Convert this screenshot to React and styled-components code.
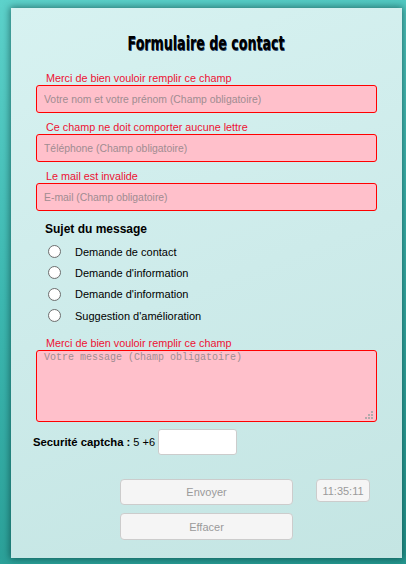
import React from "react";
import styled, { createGlobalStyle } from "styled-components";

const Global = createGlobalStyle`
  html, body { margin: 0; padding: 0; }
  body {
    width: 406px; height: 564px; overflow: hidden;
    background: linear-gradient(165deg, #5dd2cb 0%, #3db8b1 45%, #24978f 100%);
    font-family: "Liberation Sans", Arial, sans-serif;
  }
`;

const Page = styled.div`
  padding: 8px 4px 6px 11px;
  box-sizing: border-box;
  width: 406px;
  height: 564px;
`;

const Card = styled.form`
  box-sizing: border-box;
  width: 391px;
  height: 550px;
  padding: 23px 25px 0 25px;
  background: linear-gradient(160deg, #d7f2f1 0%, #cdebea 50%, #c4e5e3 100%);
  box-shadow: 0 0 7px 1px rgba(0, 40, 40, 0.55);
  display: flex;
  flex-direction: column;
`;

const Title = styled.h1`
  margin: 0 0 16px;
  text-align: center;
  font-size: 18px;
  line-height: 24px;
`;

const TitleText = styled.span`
  display: inline-block;
  font-family: "DejaVu Sans Condensed", "DejaVu Sans", sans-serif;
  font-weight: bold;
  font-size: 19px;
  color: #000;
  transform: scaleX(0.74);
  text-shadow: 0.7px 0.5px 0 #2a4466;
`;

const Field = styled.div`
  display: flex;
  flex-direction: column;
  margin-bottom: ${(p) => p.$mb ?? 8}px;
`;

const ErrorLabel = styled.label`
  display: block;
  padding-left: 10px;
  font-size: 10.8px;
  line-height: 13px;
  color: #ee1133;
`;

const TextInput = styled.input`
  box-sizing: border-box;
  width: 341px;
  height: 28px;
  border: 1px solid #ff0000;
  border-radius: 3px;
  background: #ffc0cb;
  padding: 0 7px;
  font-family: "Liberation Sans", Arial, sans-serif;
  font-size: 10.4px;
  outline: none;
  &::placeholder { color: #a08c91; }
`;

const AreaWrap = styled.div`
  position: relative;
  width: 341px;
  height: 72px;
`;

const TextArea = styled.textarea`
  display: block;
  box-sizing: border-box;
  width: 341px;
  height: 72px;
  border: 1px solid #ff0000;
  border-radius: 3px;
  background: #ffc0cb;
  padding: 1px 7px;
  font-family: "Liberation Mono", "Courier New", monospace;
  font-size: 10px;
  line-height: 12px;
  resize: none;
  outline: none;
  &::placeholder { color: #a08c91; }
`;

const Grip = styled.span`
  position: absolute;
  right: 4px;
  bottom: 3px;
  width: 2px;
  height: 2px;
  background: #b3a9ab;
  box-shadow: -3px 0 0 #b3a9ab, -6px 0 0 #b3a9ab, 0 -3px 0 #b3a9ab,
    -3px -3px 0 #b3a9ab, 0 -6px 0 #b3a9ab;
`;

const Legend = styled.div`
  margin: 11px 0 4px 9px;
  font-size: 12px;
  font-weight: bold;
  line-height: 15px;
  color: #000;
`;

const RadioList = styled.div`
  display: flex;
  flex-direction: column;
  margin-bottom: 11px;
`;

const RadioRow = styled.label`
  display: flex;
  align-items: center;
  height: 21.3px;
  padding-left: 12px;
  font-size: 11px;
  color: #000;
`;

const RadioCircle = styled.span`
  box-sizing: border-box;
  width: 13px;
  height: 13px;
  border-radius: 50%;
  border: 1px solid #6f6f6f;
  background: radial-gradient(circle at 50% 40%, #ffffff 55%, #ececec 100%);
  margin-right: 14px;
  flex: none;
`;

const CaptchaRow = styled.div`
  display: flex;
  align-items: center;
  margin: 7px 0 0 -3px;
  font-size: 11px;
  color: #000;
`;

const Bold = styled.b`
  font-weight: bold;
  font-size: 11.3px;
  margin-right: 3px;
`;

const CaptchaInput = styled.input`
  box-sizing: border-box;
  width: 79px;
  height: 26px;
  margin-left: 3px;
  border: 1px solid #cccccc;
  border-radius: 3px;
  background: #fff;
  outline: none;
`;

const Actions = styled.div`
  display: grid;
  grid-template-columns: 173px 54px;
  column-gap: 23px;
  row-gap: 8px;
  margin: 24px 0 0 84px;
  align-items: start;
`;

const Button = styled.button`
  box-sizing: border-box;
  height: ${(p) => p.$h || 26}px;
  border: 1px solid #cccccc;
  border-radius: 4px;
  background: #f5f5f5;
  color: #9a9a9a;
  font-family: "Liberation Sans", Arial, sans-serif;
  font-size: 11px;
  padding: 0;
`;

const Clock = styled.div`
  box-sizing: border-box;
  height: 23px;
  border: 1px solid #cccccc;
  border-radius: 4px;
  background: #f5f5f5;
  color: #9a9a9a;
  font-size: 11px;
  display: flex;
  align-items: center;
  justify-content: center;
`;

const subjects = [
  "Demande de contact",
  "Demande d'information",
  "Demande d'information",
  "Suggestion d'amélioration",
];

export default function App() {
  return (
    <>
      <Global />
      <Page>
        <Card onSubmit={(e) => e.preventDefault()}>
          <Title>
            <TitleText>Formulaire de contact</TitleText>
          </Title>
          <Field>
            <ErrorLabel>Merci de bien vouloir remplir ce champ</ErrorLabel>
            <TextInput placeholder="Votre nom et votre prénom (Champ obligatoire)" />
          </Field>
          <Field>
            <ErrorLabel>Ce champ ne doit comporter aucune lettre</ErrorLabel>
            <TextInput placeholder="Téléphone (Champ obligatoire)" />
          </Field>
          <Field $mb={0}>
            <ErrorLabel>Le mail est invalide</ErrorLabel>
            <TextInput placeholder="E-mail (Champ obligatoire)" />
          </Field>
          <Legend>Sujet du message</Legend>
          <RadioList>
            {subjects.map((s, i) => (
              <RadioRow key={i}>
                <RadioCircle />
                {s}
              </RadioRow>
            ))}
          </RadioList>
          <Field $mb={0}>
            <ErrorLabel>Merci de bien vouloir remplir ce champ</ErrorLabel>
            <AreaWrap>
              <TextArea placeholder="Votre message (Champ obligatoire)" />
              <Grip />
            </AreaWrap>
          </Field>
          <CaptchaRow>
            <Bold>Securité captcha :</Bold>5 +6
            <CaptchaInput />
          </CaptchaRow>
          <Actions>
            <Button type="submit">Envoyer</Button>
            <Clock>11:35:11</Clock>
            <Button type="button" $h={27}>Effacer</Button>
          </Actions>
        </Card>
      </Page>
    </>
  );
}
